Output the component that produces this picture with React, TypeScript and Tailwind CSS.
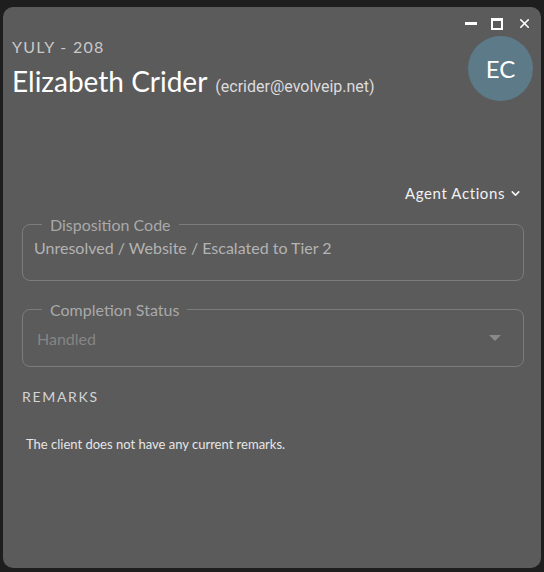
import { ChevronDown, X } from "lucide-react";

const App = () => {
  return (
    <div className="w-[544px] h-[572px] bg-[#1e1e1e] pt-[7px] px-[3px] pb-[4px] font-['Lato',sans-serif]">
      <div className="relative h-full rounded-[10px] bg-[#5b5b5b] px-[9px]">
        <div className="absolute right-[9px] top-[9px] flex items-center gap-[14px] text-white">
          <div className="w-[12px] h-[3px] bg-white" />
          <div className="w-[12px] h-[12px] border-2 border-t-[3px] border-white" />
          <X size={15} strokeWidth={2.5} />
        </div>
        <div className="absolute right-[8px] top-[29px] w-[65px] h-[65px] rounded-full bg-[#5d7a88] flex items-center justify-center text-white text-[24px]">
          EC
        </div>

        <div className="pt-[28px] text-[16px] leading-[24px] tracking-[0.08em] text-[#c9c9c9]">
          YULY - 208
        </div>
        <div className="mt-[4px] flex items-baseline gap-[8px] leading-[36px]">
          <span className="text-[28px] text-white">Elizabeth Crider</span>
          <span className="text-[16px] text-[#dcdcdc] font-['Roboto',sans-serif]">
            (ecrider@evolveip.net)
          </span>
        </div>

        <div className="mt-[77px] flex justify-end items-center gap-[4px] pr-[10px] text-[15px] tracking-[0.04em] text-[#f2f2f2]">
          Agent Actions
          <ChevronDown size={13} strokeWidth={3} />
        </div>

        <div className="ml-[10px] mr-[8px] mt-[8px]">
          <fieldset className="h-[68px] rounded-[8px] border border-[#7c7c7c] px-[11px]">
            <legend className="ml-[8px] px-[8px] text-[16px] text-[#a9a9a9]">
              Disposition Code
            </legend>
            <div className="-mt-[1px] text-[16px] text-[#b3b3b3]">
              Unresolved / Website / Escalated to Tier 2
            </div>
          </fieldset>

          <fieldset className="mt-[17px] h-[69px] rounded-[8px] border border-[#7c7c7c] px-[14px]">
            <legend className="ml-[5px] px-[8px] text-[16px] text-[#a9a9a9]">
              Completion Status
            </legend>
            <div className="flex items-center justify-between mt-[5px]">
              <span className="text-[16px] text-[#858585]">Handled</span>
              <svg width="12" height="7" viewBox="0 0 12 7" className="mr-[8px]">
                <path d="M0 0 L12 0 L6 6 Z" fill="#8a8a8a" />
              </svg>
            </div>
          </fieldset>
        </div>

        <div className="ml-[10px] mt-[19px] text-[14px] tracking-[0.12em] text-[#d4d4d4]">
          REMARKS
        </div>
        <div className="ml-[14px] mt-[28px] text-[13px] text-[#e6e6e6]">
          The client does not have any current remarks.
        </div>
      </div>
    </div>
  );
};

export default App;
